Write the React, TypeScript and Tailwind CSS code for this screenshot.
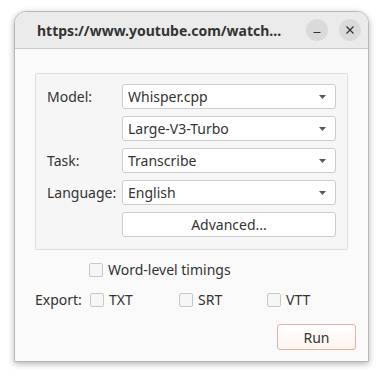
import React from "react";

const font = { fontFamily: '"Noto Sans", "Open Sans", sans-serif' };

function Combo({ value }: { value: string }) {
  return (
    <div className="flex h-[25px] w-[214px] items-center justify-between rounded-[3px] border border-[#cdcdcd] bg-white pl-[5px] pr-[9px] text-[14px] text-[#333]">
      <span>{value}</span>
      <svg width="7" height="4" viewBox="0 0 7 4">
        <path d="M0 0 H7 L3.5 4 Z" fill="#5a5a5a" />
      </svg>
    </div>
  );
}

function Check({ label }: { label: string }) {
  return (
    <div className="flex items-center gap-[5px]">
      <div className="h-[14px] w-[14px] rounded-[2px] border border-[#c8c8c8] bg-[#f6f6f6]" />
      <span className="text-[14px] text-[#333]">{label}</span>
    </div>
  );
}

export default function App() {
  return (
    <div className="h-[379px] w-[383px] bg-white pl-[14px] pt-[11px]" style={font}>
      <div className="flex h-[351px] w-[355px] flex-col overflow-hidden rounded-t-[12px] border border-[#b8b8b8] bg-[#fafafa] shadow-[0_2px_6px_rgba(0,0,0,0.3)]">
        <div className="flex h-[37px] shrink-0 items-center border-b border-[#c9c9c9] bg-[#ebebeb] pl-[22px] pr-[7px]">
          <span className="flex-1 text-[14px] font-bold text-[#333]">https://www.youtube.com/watch...</span>
          <div className="flex items-center gap-[11px]">
            <div className="flex h-[22px] w-[22px] items-center justify-center rounded-full bg-[#dadada]">
              <svg width="10" height="10" viewBox="0 0 10 10">
                <path d="M1.5 7.5 H8.5" stroke="#333" strokeWidth="1.2" />
              </svg>
            </div>
            <div className="flex h-[22px] w-[22px] items-center justify-center rounded-full bg-[#dadada]">
              <svg width="10" height="10" viewBox="0 0 10 10">
                <path d="M1.5 1.5 L8.5 8.5 M8.5 1.5 L1.5 8.5" stroke="#333" strokeWidth="1.2" />
              </svg>
            </div>
          </div>
        </div>
        <div className="flex flex-1 flex-col px-[20px] pt-[24px]">
          <div className="flex flex-col gap-[7px] rounded-[2px] border border-[#dedede] bg-[#f6f6f6] px-[11px] pb-[12px] pt-[10px]">
            <div className="flex items-center">
              <span className="w-[75px] text-[14px] text-[#333]">Model:</span>
              <Combo value="Whisper.cpp" />
            </div>
            <div className="flex items-center">
              <span className="w-[75px]" />
              <Combo value="Large-V3-Turbo" />
            </div>
            <div className="flex items-center">
              <span className="w-[75px] text-[14px] text-[#333]">Task:</span>
              <Combo value="Transcribe" />
            </div>
            <div className="flex items-center">
              <span className="w-[75px] text-[14px] text-[#333]">Language:</span>
              <Combo value="English" />
            </div>
            <div className="flex items-center">
              <span className="w-[75px]" />
              <div className="flex h-[25px] w-[214px] items-center justify-center rounded-[3px] border border-[#cdcdcd] bg-white text-[14px] text-[#333]">
                Advanced...
              </div>
            </div>
          </div>
          <div className="mt-[9px] pl-[54px]">
            <Check label="Word-level timings" />
          </div>
          <div className="mt-[9px] flex items-center">
            <span className="w-[55px] text-[14px] text-[#333]">Export:</span>
            <div className="w-[89px]"><Check label="TXT" /></div>
            <div className="w-[88px]"><Check label="SRT" /></div>
            <div><Check label="VTT" /></div>
          </div>
          <div className="mt-[14px] flex justify-end">
            <div className="mr-[-8px] flex h-[26px] w-[79px] items-center justify-center rounded-[3px] border border-[#e2b4a0] bg-gradient-to-b from-white to-[#fdf3ef] text-[14px] text-[#333]">
              Run
            </div>
          </div>
        </div>
      </div>
    </div>
  );
}
